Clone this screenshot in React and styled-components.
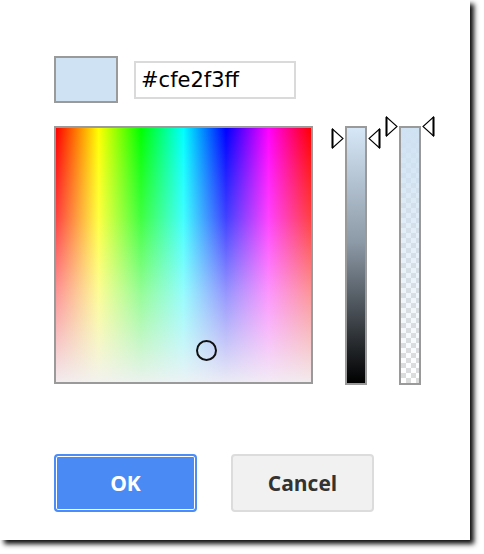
import React, { useState } from 'react';
import styled, { createGlobalStyle } from 'styled-components';

const GlobalStyle = createGlobalStyle`
  html, body {
    margin: 0;
    padding: 0;
    background: #ffffff;
  }
  body {
    min-height: 554px;
  }
`

function Arrow({ dir }) {
    // little outlined pointer that sits beside a slider
    const left = dir === 'right';
    return (
        <svg width="13" height="21" viewBox="0 0 13 21">
            <path
                d={left ? 'M1.5 1 L1.5 20 L12 10.5 Z' : 'M11.5 1 L11.5 20 L1 10.5 Z'}
                fill="#fff"
                stroke="#000"
                strokeWidth="1.1"
                strokeLinejoin="miter"
            />
            <line x1={left ? 1.5 : 11.5} y1="1" x2={left ? 1.5 : 11.5} y2="20" stroke="#000" strokeWidth="2" />
        </svg>
    )
}

export default function App() {

    const [hex, setHex] = useState('#cfe2f3ff');

    return (
        <>
            <GlobalStyle />
            <Dialog>
                <Header>
                    <Swatch $color="#cfe2f3" />
                    <HexInput
                        type="text"
                        value={hex}
                        onChange={(e) => setHex(e.target.value)}
                    />
                </Header>

                <Picker>
                    <Spectrum>
                        <Marker style={{ left: 140, top: 212 }} />
                    </Spectrum>

                    <SliderWrap>
                        <Pointer $side="left" $top={2}><Arrow dir="right" /></Pointer>
                        <LightBar />
                        <Pointer $side="right" $top={2}><Arrow dir="left" /></Pointer>
                    </SliderWrap>

                    <SliderWrap>
                        <Pointer $side="left" $top={-10}><Arrow dir="right" /></Pointer>
                        <AlphaBar />
                        <Pointer $side="right" $top={-10}><Arrow dir="left" /></Pointer>
                    </SliderWrap>
                </Picker>

                <Actions>
                    <Button $primary>OK</Button>
                    <Button>Cancel</Button>
                </Actions>
            </Dialog>
        </>
    )
}

const Dialog = styled.div`
    box-sizing: border-box;
    width: 470px;
    height: 540px;
    padding: 56px 0 0 54px;
    background: #ffffff;
    box-shadow: 4px 4px 5px rgba(0, 0, 0, 0.95);
`

const Header = styled.div`
    display: flex;
    align-items: center;
    gap: 16px;
`

const Swatch = styled.div`
    box-sizing: border-box;
    width: 64px;
    height: 47px;
    border: 2px solid #9a9a9a;
    background: ${(p) => p.$color};
`

const HexInput = styled.input`
    box-sizing: border-box;
    width: 162px;
    height: 38px;
    margin: 0;
    padding: 0 0 0 5px;
    border: 2px solid #dadada;
    outline: none;
    background: #fff;
    font-family: "DejaVu Sans", Verdana, sans-serif;
    font-size: 21px;
    color: #000;
`

const Picker = styled.div`
    display: flex;
    align-items: flex-start;
    gap: 32px;
    margin-top: 23px;
`

const Spectrum = styled.div`
    position: relative;
    box-sizing: border-box;
    width: 259px;
    height: 258px;
    border: 2px solid #9a9a9a;
    background:
        linear-gradient(to bottom,
            rgba(255, 255, 255, 0) 0%,
            rgba(255, 255, 255, 0.25) 35%,
            rgba(250, 250, 252, 0.6) 65%,
            rgba(242, 242, 245, 0.97) 100%),
        linear-gradient(to right,
            #ff0000 0%, #ffff00 16.7%, #00ff00 33.3%, #00ffff 50%,
            #0000ff 66.7%, #ff00ff 83.3%, #ff0000 100%);
`

const Marker = styled.div`
    position: absolute;
    box-sizing: border-box;
    width: 21px;
    height: 21px;
    border: 2px solid #111;
    border-radius: 50%;
`

const SliderWrap = styled.div`
    position: relative;
    width: 22px;
`

const Pointer = styled.div`
    position: absolute;
    top: ${(p) => p.$top}px;
    ${(p) => (p.$side === 'left' ? 'left: -14px;' : 'right: -14px;')}
    line-height: 0;
`

const Bar = styled.div`
    box-sizing: border-box;
    width: 22px;
    height: 259px;
    border: 2px solid #9a9a9a;
`

const LightBar = styled(Bar)`
    background: linear-gradient(to bottom, #d6e7f7 0%, #8c99a6 45%, #000 100%);
`

const AlphaBar = styled(Bar)`
    background:
        linear-gradient(to bottom, rgba(207, 226, 243, 1) 0%, rgba(207, 226, 243, 0) 100%),
        repeating-conic-gradient(#dcdcdc 0% 25%, #ffffff 0% 50%) 0 0 / 10px 10px;
`

const Actions = styled.div`
    display: flex;
    gap: 34px;
    margin-top: 69px;
`

const Button = styled.button`
    box-sizing: border-box;
    width: 143px;
    height: 58px;
    margin: 0;
    border-radius: 4px;
    font-family: "Open Sans", "Liberation Sans", sans-serif;
    font-weight: 700;
    font-size: 21px;
    cursor: pointer;
    color: ${(p) => (p.$primary ? '#ffffff' : '#333333')};
    background: ${(p) => (p.$primary ? '#4a8af4' : '#f1f1f1')};
    border: ${(p) => (p.$primary ? '2px solid #4b8cf7' : '2px solid #dcdcdc')};
    box-shadow: ${(p) => (p.$primary ? 'inset 0 0 0 1px #ffffff' : 'none')};
`
